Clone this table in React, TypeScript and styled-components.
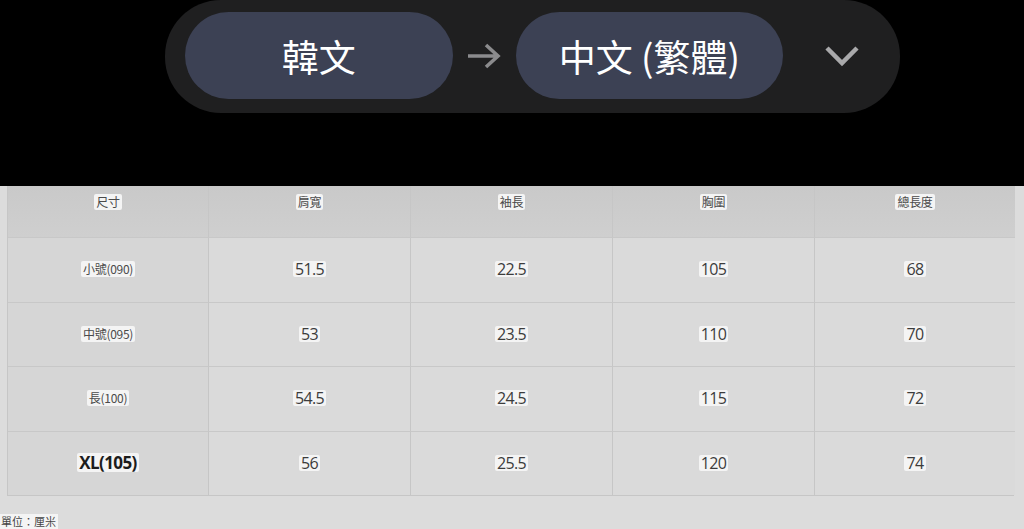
import React from "react";
import styled, { createGlobalStyle } from "styled-components";

const Global = createGlobalStyle`
  html, body { margin: 0; padding: 0; background: #dcdcdc; }
  body { width: 1024px; height: 529px; overflow: hidden; font-family: "Noto Sans CJK TC", "Noto Sans", sans-serif; }
`;

const Top = styled.div`
  height: 186px;
  background: #000;
  display: flex;
  padding-left: 165px;
  box-sizing: border-box;
`;

const Bar = styled.div`
  width: 735px;
  height: 113px;
  background: #1f1f20;
  display: flex;
  align-items: center;
  padding: 0 0 2px 20px;
  box-sizing: border-box;
  border-radius: 56px;
`;

const Pill = styled.div`
  width: 268px;
  height: 87px;
  border-radius: 44px;
  background: #3c4154;
  color: #fff;
  display: flex;
  align-items: center;
  justify-content: center;
  font-family: "Noto Sans CJK TC", sans-serif;
  font-size: 37px;
  font-weight: 400;
`;

const Arrow = styled.div`
  width: 63px;
  display: flex;
  justify-content: center;
  align-items: center;
`;

const Chevron = styled.div`
  width: 117px;
  display: flex;
  justify-content: center;
  align-items: center;
`;

const Lower = styled.div`
  padding: 0 10px 0 7px;
`;

const Grid = styled.div`
  display: grid;
  grid-template-columns: 200px 202px 202px 202px 201px;
  grid-template-rows: 51px 65px 64px 65px 64px;
  border-right: 1px solid #c6c6c6;
  border-bottom: 1px solid #c6c6c6;
  border-left: 1px solid #c6c6c6;
  width: 1007px;
  box-sizing: border-box;
`;

const Cell = styled.div<{ $head?: boolean; $first?: boolean }>`
  display: flex;
  justify-content: center;
  align-items: ${(p) => (p.$head ? "flex-start" : "center")};
  padding-top: ${(p) => (p.$head ? "8px" : "0")};
  padding-bottom: ${(p) => (p.$head ? "0" : "2px")};
  box-sizing: border-box;
  border-left: 1px solid #c6c6c6;
  border-top: ${(p) => (p.$head ? "none" : "1px solid #c8c8c8")};
  background: ${(p) =>
    p.$head
      ? "linear-gradient(#c9c9c9, #cfcfcf)"
      : p.$first
      ? "#d6d6d6"
      : "#dadada"};
  &:nth-child(5n + 1) { border-left: none; }
`;

const Label = styled.span<{ $size?: "sm" | "num" | "big" }>`
  background: #f4f4f4;
  border-radius: 2px;
  color: ${(p) => (p.$size === "big" ? "#1c1c1c" : p.$size === "num" ? "#3c3c3c" : "#4a4a4a")};
  font-family: ${(p) =>
    p.$size === "sm"
      ? `"Noto Sans CJK TC", sans-serif`
      : `"Open Sans", "Noto Sans CJK TC", sans-serif`};
  font-size: ${(p) => (p.$size === "big" ? "17px" : p.$size === "num" ? "16px" : "12px")};
  font-weight: ${(p) => (p.$size === "big" ? 700 : 400)};
  line-height: ${(p) => (p.$size === "big" ? "19px" : p.$size === "num" ? "16px" : "16px")};
  padding: 0 2px;
  letter-spacing: ${(p) => (p.$size === "sm" ? "-0.3px" : "-0.6px")};
`;

const Footer = styled.div`
  margin-top: 18px;
  display: flex;
`;

const Unit = styled.span`
  background: #f4f4f4;
  color: #444;
  font-size: 11px;
  line-height: 15px;
  padding: 0 2px 0 1px;
  font-family: "Noto Sans CJK TC", sans-serif;
`;

const headers = ["尺寸", "肩寬", "袖長", "胸圍", "總長度"];
const rows: { size: string; big?: boolean; vals: string[] }[] = [
  { size: "小號(090)", vals: ["51.5", "22.5", "105", "68"] },
  { size: "中號(095)", vals: ["53", "23.5", "110", "70"] },
  { size: "長(100)", vals: ["54.5", "24.5", "115", "72"] },
  { size: "XL(105)", big: true, vals: ["56", "25.5", "120", "74"] },
];

export default function App() {
  return (
    <>
      <Global />
      <Top>
        <Bar>
          <Pill>韓文</Pill>
          <Arrow>
            <svg width="36" height="30" viewBox="0 0 36 30">
              <path d="M2 15 H32 M20 4 L32 15 L20 26" fill="none" stroke="#8b8b8d" strokeWidth="3.6" />
            </svg>
          </Arrow>
          <Pill>中文 (繁體)</Pill>
          <Chevron>
            <svg width="36" height="24" viewBox="0 0 36 24">
              <path d="M3 4 L18 19 L33 4" fill="none" stroke="#a9a9ab" strokeWidth="4.5" />
            </svg>
          </Chevron>
        </Bar>
      </Top>
      <Lower>
        <Grid>
          {headers.map((h) => (
            <Cell key={h} $head>
              <Label $size="sm">{h}</Label>
            </Cell>
          ))}
          {rows.map((r) => (
            <React.Fragment key={r.size}>
              <Cell $first>
                <Label $size={r.big ? "big" : "sm"}>{r.size}</Label>
              </Cell>
              {r.vals.map((v, i) => (
                <Cell key={i}>
                  <Label $size="num">{v}</Label>
                </Cell>
              ))}
            </React.Fragment>
          ))}
        </Grid>
      </Lower>
      <Footer>
        <Unit>單位：厘米</Unit>
      </Footer>
    </>
  );
}
